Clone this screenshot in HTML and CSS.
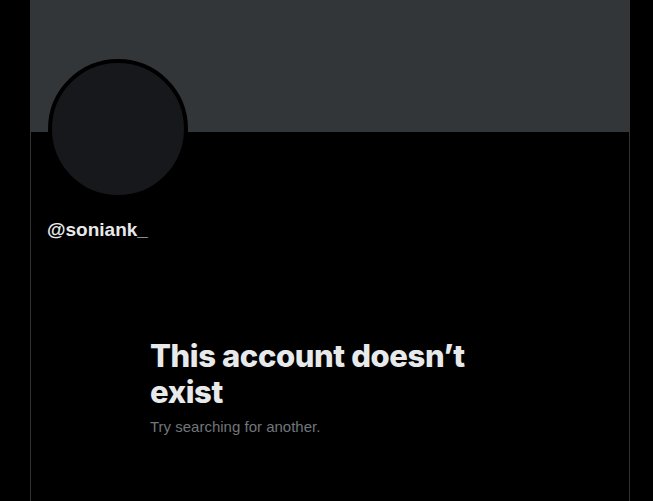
FILE: index.html
```html
<!DOCTYPE html>
<html lang="en">
<head>
  <meta charset="UTF-8" />
  <meta name="viewport" content="width=device-width, initial-scale=1.0"/>
  <title>Profile</title>
  <link rel="stylesheet" href="styles.css">
</head>
<body>
  <main class="column">
    <div class="banner"></div>
    <div class="profile">
      <div class="avatar"></div>
      <div class="handle">@soniank_</div>
      <div class="empty">
        <h1 class="empty-title">This account doesn’t exist</h1>
        <p class="empty-text">Try searching for another.</p>
      </div>
    </div>
  </main>
</body>
</html>
```
FILE: styles.css
```css
* {
  box-sizing: border-box;
}

body {
  margin: 0;
  background-color: black;
  font-family: "Liberation Sans", Arial, sans-serif;
  color: #e7e9ea;
}

.column {
  width: 600px;
  margin-left: 30px;
  min-height: 501px;
  display: flex;
  flex-direction: column;
}

.banner {
  height: 132px;
  background-color: #333639;
}

.profile {
  flex: 1;
  border-left: 1px solid #2f3336;
  border-right: 1px solid #2f3336;
  padding: 0 16px;
}

.avatar {
  width: 140px;
  height: 140px;
  margin-top: -73px;
  margin-left: 1px;
  border-radius: 50%;
  border: 4px solid black;
  background-color: #16181c;
}

.handle {
  margin-top: 19px;
  font-size: 19px;
  line-height: 24px;
  font-weight: bold;
}

.empty {
  width: 400px;
  margin: 96px auto 0;
  padding: 0 20px;
}

.empty-title {
  margin: 0;
  font-family: Inter, "Liberation Sans", sans-serif;
  font-size: 31px;
  line-height: 36px;
  font-weight: 800;
  letter-spacing: -0.4px;
}

.empty-text {
  margin: 7px 0 0;
  font-size: 15px;
  line-height: 20px;
  color: #71767b;
}
```
